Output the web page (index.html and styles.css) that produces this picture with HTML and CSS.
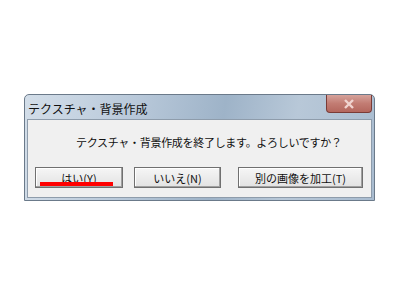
FILE: index.html
```html
<!DOCTYPE html>
<html lang="ja">
<head>
    <meta charset="UTF-8">
    <title>テクスチャ・背景作成</title>
    <link rel="stylesheet" href="styles.css">
</head>
<body>
    <div class="window">
        <div class="titlebar">
            <span class="title">テクスチャ・背景作成</span>
            <button class="close">
                <svg width="12" height="10" viewBox="0 0 12 10">
                    <path d="M2 1 L10 9 M10 1 L2 9" stroke="#f0d4d0" stroke-width="2.4" fill="none"/>
                </svg>
            </button>
        </div>
        <div class="panel">
            <p class="message">テクスチャ・背景作成を終了します。よろしいですか？</p>
            <div class="buttons">
                <button class="btn btn-yes">はい(Y)<span class="mark"></span></button>
                <button class="btn btn-no">いいえ(N)</button>
                <button class="btn btn-other">別の画像を加工(T)</button>
            </div>
        </div>
    </div>
</body>
</html>
```

FILE: styles.css
```css
body {
    margin: 0;
    background: white;
    font-family: "Noto Sans CJK JP", "Noto Sans", sans-serif;
    padding: 94px 0 0 24px;
}
.window {
    width: 351px;
    height: 107px;
    box-sizing: border-box;
    border: 1px solid #6b7a8a;
    border-radius: 5px 5px 0 0;
    background: linear-gradient(100deg, #d3dee9 0%, #b9c9da 30%, #9eb3c8 55%, #b8c8d8 75%, #a9bcd0 100%);
    padding: 0 2px 2px 2px;
    display: flex;
    flex-direction: column;
}
.titlebar {
    height: 24px;
    display: flex;
    align-items: center;
    justify-content: space-between;
}
.title {
    font-size: 12px;
    color: #111;
    margin-left: 1px;
    margin-top: 2px;
}
.close {
    width: 46px;
    height: 18px;
    margin-top: -6px;
    border: 1px solid #7a3b36;
    border-top: none;
    border-radius: 0 0 4px 4px;
    background: linear-gradient(#d6a29b, #c27c73 50%, #b4675e);
    display: flex;
    align-items: center;
    justify-content: center;
    padding: 0;
}
.panel {
    flex: 1;
    background: #f0f0f0;
    border: 1px solid #8e9cab;
    display: flex;
    flex-direction: column;
}
.message {
    margin: 14px 0 0 48px;
    font-size: 11px;
    color: #111;
    letter-spacing: -0.3px;
}
.buttons {
    display: flex;
    margin: 17px 0 0 7px;
}
.btn {
    position: relative;
    height: 21px;
    font-family: inherit;
    font-size: 11px;
    color: #111;
    background: linear-gradient(#f6f6f6, #e2e2e2);
    border: 1px solid #707070;
    box-shadow: inset -1px -1px 0 #a0a0a0, inset 1px 1px 0 #fff;
    padding: 0;
}
.btn-yes {
    width: 88px;
}
.btn-no {
    width: 87px;
    margin-left: 11px;
}
.btn-other {
    width: 125px;
    margin-left: 17px;
}
.mark {
    position: absolute;
    left: 4px;
    bottom: 1px;
    width: 73px;
    height: 4px;
    background: #ff0000;
}
```
